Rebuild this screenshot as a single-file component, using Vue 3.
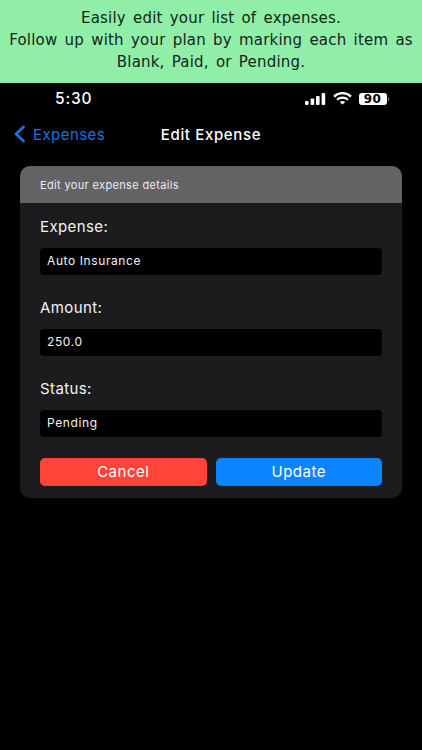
<script setup>
const fields = [
  { label: 'Expense:', value: 'Auto Insurance' },
  { label: 'Amount:', value: '250.0' },
  { label: 'Status:', value: 'Pending' }
]
</script>

<template>
  <div class="page">
    <header class="banner">
      <p>Easily edit your list of expenses.</p>
      <p>Follow up with your plan by marking each item as</p>
      <p>Blank, Paid, or Pending.</p>
    </header>
    <div class="status">
      <span class="time">5:30</span>
      <div class="indicators">
        <svg class="signal" width="21" height="12" viewBox="0 0 21 12" fill="#fff">
          <rect x="0" y="8" width="3.6" height="4" rx="1" />
          <rect x="5.6" y="5.6" width="3.6" height="6.4" rx="1" />
          <rect x="11" y="3" width="3.6" height="9" rx="1" />
          <rect x="16.6" y="0" width="3.6" height="12" rx="1" />
        </svg>
        <svg class="wifi" width="19" height="13" viewBox="0 0 19 13" fill="none" stroke="#fff" stroke-width="2.2">
          <path d="M1 4.6C5.8 0 13.2 0 18 4.6" />
          <path d="M4 7.7C7 5 12 5 15 7.7" />
          <path d="M9.5 12.4 6.8 9.9C8.3 8.7 10.7 8.7 12.2 9.9Z" fill="#fff" stroke="none" />
        </svg>
        <div class="battery">90</div>
        <div class="nub"></div>
      </div>
    </div>
    <nav class="navbar">
      <div class="back">
        <svg width="13" height="18" viewBox="0 0 13 18" fill="none" stroke="#1a74dc" stroke-width="2.6" stroke-linecap="round" stroke-linejoin="round">
          <path d="M10.5 2 3 9l7.5 7" />
        </svg>
        <span>Expenses</span>
      </div>
      <h1>Edit Expense</h1>
    </nav>
    <section class="card">
      <div class="card-head">Edit your expense details</div>
      <div class="card-body">
        <div v-for="f in fields" :key="f.label" class="field">
          <div class="label">{{ f.label }}</div>
          <div class="input">{{ f.value }}</div>
        </div>
        <div class="actions">
          <button class="btn cancel">Cancel</button>
          <button class="btn update">Update</button>
        </div>
      </div>
    </section>
  </div>
</template>

<style>
html, body { margin: 0; background: #000; }
</style>

<style scoped>
.page {
  width: 422px;
  height: 750px;
  background: #000;
  overflow: hidden;
  font-family: Inter, "Liberation Sans", sans-serif;
  color: #fff;
}
.banner {
  height: 83px;
  box-sizing: border-box;
  background: #90eea8;
  color: #10261a;
  padding-top: 7px;
  text-align: center;
  font-family: "DejaVu Sans", sans-serif;
  font-size: 15px;
  line-height: 22px;
  letter-spacing: 0.2px;
  word-spacing: 2.2px;
}
.banner p { margin: 0; white-space: nowrap; }
.status {
  height: 31px;
  display: flex;
  align-items: center;
  justify-content: space-between;
  padding: 0 33px 0 55px;
}
.time { font-size: 15.5px; font-weight: 500; letter-spacing: 0.8px; }
.indicators { display: flex; align-items: center; }
.signal { margin-right: 7px; }
.wifi { margin-right: 7px; }
.battery {
  width: 28px;
  height: 12px;
  border-radius: 3px;
  background: #fff;
  color: #000;
  font-family: "DejaVu Sans", sans-serif;
  font-size: 12px;
  font-weight: 700;
  letter-spacing: 0.5px;
  line-height: 12px;
  text-align: center;
}
.nub { width: 1.5px; height: 4px; margin-left: 1px; background: #888; border-radius: 0 1px 1px 0; }
.navbar {
  height: 40px;
  position: relative;
  display: flex;
  align-items: center;
  justify-content: center;
}
.back {
  position: absolute;
  left: 13px;
  top: 0;
  height: 40px;
  display: flex;
  align-items: center;
  gap: 7px;
  color: #1a74dc;
  font-size: 15px;
  letter-spacing: 0.45px;
}
h1 { margin: 0; font-size: 15px; font-weight: 500; letter-spacing: 0.65px; }
.card {
  margin: 12px 20px 0;
  height: 332px;
  border-radius: 10px;
  background: #1c1c1e;
  overflow: hidden;
}
.card-head {
  height: 37px;
  box-sizing: border-box;
  padding: 0 20px;
  display: flex;
  align-items: center;
  background: #636366;
  color: #ebebf0;
  font-size: 11px;
  letter-spacing: 0.35px;
}
.card-body { padding: 14px 20px 0; }
.field { height: 81px; }
.label { height: 20px; line-height: 20px; font-size: 15px; font-weight: 400; color: #f2f2f2; letter-spacing: 0.4px; }
.input {
  margin-top: 11px;
  height: 26.5px;
  border-radius: 4px;
  background: #000;
  padding: 0 7px;
  line-height: 26.5px;
  font-size: 12px;
  letter-spacing: 0.6px;
  color: #f2f2f2;
}
.actions { display: flex; gap: 9px; margin-top: -2px; }
.btn {
  flex: 1;
  height: 27.5px;
  border: 0;
  border-radius: 5px;
  color: #fff;
  font-family: inherit;
  font-size: 15px;
  font-weight: 400;
  letter-spacing: 0.5px;
  padding: 0;
}
.cancel { background: #ff453a; }
.update { background: #0a84ff; }
</style>
